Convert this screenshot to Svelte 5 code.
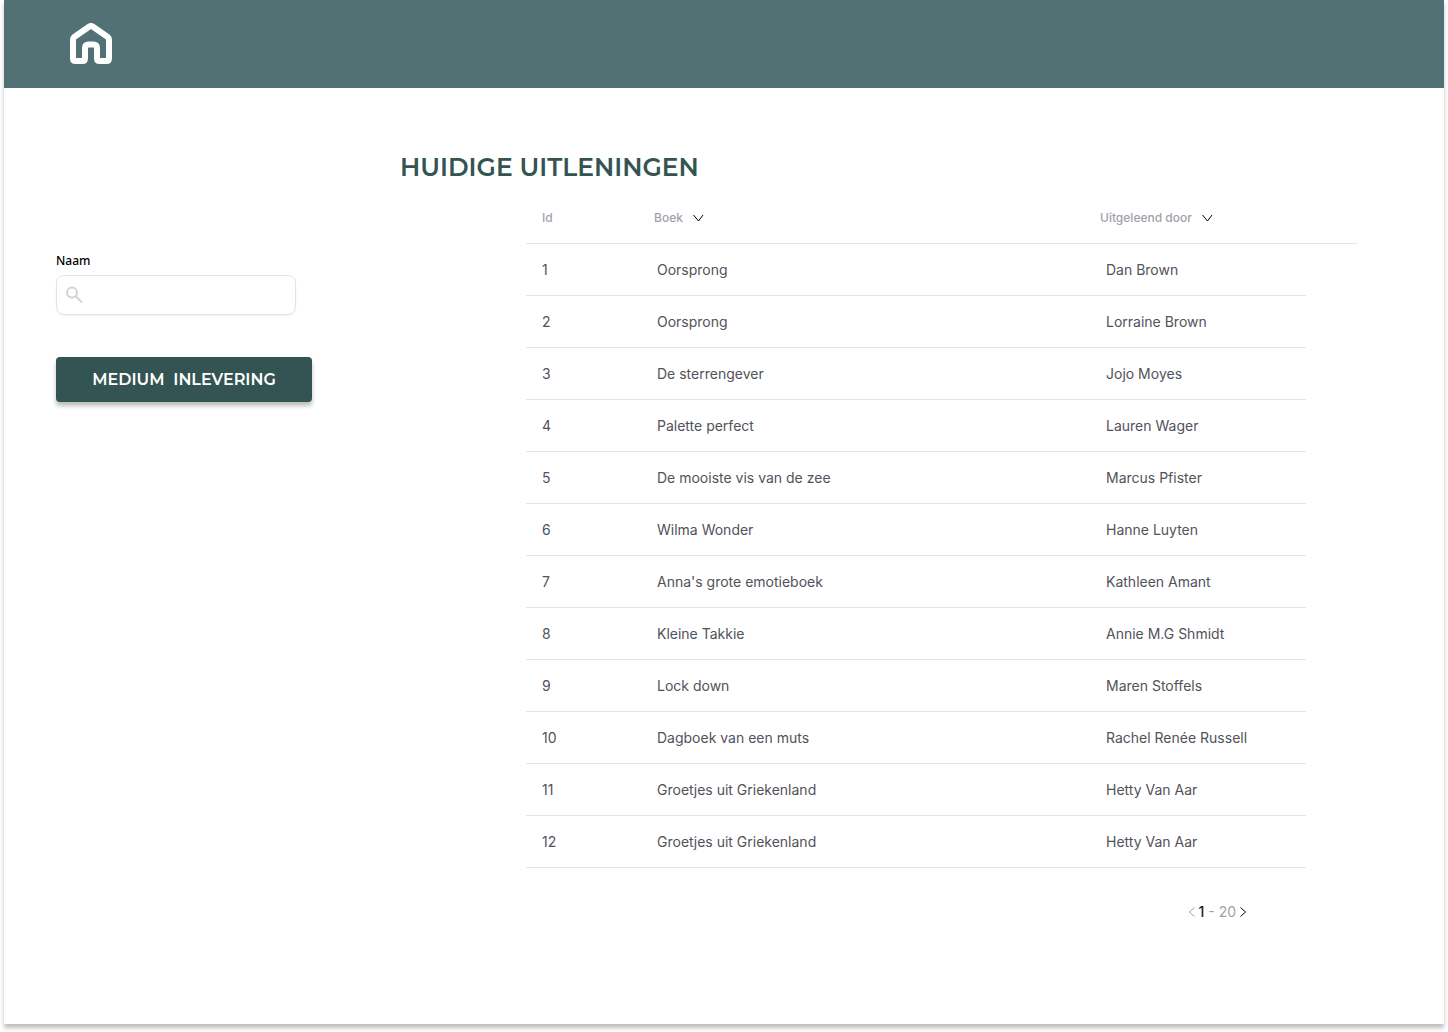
<script>
  const loans = [
    ['Oorsprong', 'Dan Brown'],
    ['Oorsprong', 'Lorraine Brown'],
    ['De sterrengever', 'Jojo Moyes'],
    ['Palette perfect', 'Lauren Wager'],
    ['De mooiste vis van de zee', 'Marcus Pfister'],
    ['Wilma Wonder', 'Hanne Luyten'],
    ["Anna's grote emotieboek", 'Kathleen Amant'],
    ['Kleine Takkie', 'Annie M.G Shmidt'],
    ['Lock down', 'Maren Stoffels'],
    ['Dagboek van een muts', 'Rachel Renée Russell'],
    ['Groetjes uit Griekenland', 'Hetty Van Aar'],
    ['Groetjes uit Griekenland', 'Hetty Van Aar']
  ].map(([book, borrower], i) => ({ id: i + 1, book, borrower }));

  let name = $state('');
</script>

{#snippet chevron()}
  <svg class="chevron" viewBox="0 0 12 12" aria-hidden="true"><path d="M1.500 3 6.500 9l4.500-6" /></svg>
{/snippet}

<div class="page">
  <header>
    <a class="home" href="#home" aria-label="Home">
      <svg viewBox="0 0 42 42" aria-hidden="true">
        <path d="M3 17Q3 15 4.600 13.700L19 3.700Q21 2.300 23 3.700L37.400 13.700Q39 15 39 17V35.500Q39 38 36.500 38H29.500Q27 38 27 35.500V25Q27 21.500 23.500 21.500H18.500Q15 21.500 15 25V35.500Q15 38 12.500 38H5.500Q3 38 3 35.500Z" />
      </svg>
    </a>
  </header>

  <div class="content">
    <aside>
      <label for="naam">Naam</label>
      <div class="search">
        <svg viewBox="0 0 18 18" aria-hidden="true">
          <circle cx="7" cy="6.500" r="5" /><path d="m11 10.500 6 6" />
        </svg>
        <input id="naam" type="text" bind:value={name} />
      </div>
      <button class="return" type="button">MEDIUM&nbsp; INLEVERING</button>
    </aside>

    <main>
      <h1>HUIDIGE UITLENINGEN</h1>
      <div class="list">
        <table>
          <colgroup><col class="c-id" /><col class="c-book" /><col class="c-borrower" /><col class="c-end" /></colgroup>
          <thead>
            <tr>
              <th class="id" scope="col">Id</th>
              <th scope="col"><button type="button">Boek {@render chevron()}</button></th>
              <th scope="col"><button type="button">Uitgeleend door {@render chevron()}</button></th>
              <td></td>
            </tr>
          </thead>
          <tbody>
            {#each loans as loan (loan.id)}
              <tr>
                <td class="id">{loan.id}</td>
                <td class="book">{loan.book}</td>
                <td class="borrower">{loan.borrower}</td>
              </tr>
            {/each}
          </tbody>
        </table>
        <nav aria-label="Paginering">
          <button class="prev" type="button" aria-label="Vorige"><svg viewBox="0 0 8 12" aria-hidden="true"><path d="M6.500 1.500 1.500 6l5 4.500" /></svg></button>
          <span><strong>1</strong> - 20</span>
          <button type="button" aria-label="Volgende"><svg viewBox="0 0 8 12" aria-hidden="true"><path d="m1.500 1.500 5 4.500-5 4.500" /></svg></button>
        </nav>
      </div>
    </main>
  </div>
</div>

<style>
  :global(body) {
    background: #fff;
  }
  .page {
    box-sizing: border-box;
    min-height: calc(100vh - 8px);
    margin: 0 4px 8px;
    background: #fff;
    box-shadow: 0 4px 4px rgba(0, 0, 0, 0.25);
    font-family: Inter, "Liberation Sans", sans-serif;
    font-size: 14px;
    line-height: 20px;
    color: #52525b;
  }
  svg {
    display: block;
    fill: none;
    stroke: currentColor;
  }
  button {
    font: inherit;
    color: inherit;
    border: 0;
    padding: 0;
    background: none;
    cursor: pointer;
  }
  header {
    display: flex;
    align-items: center;
    height: 88px;
    padding: 0 66px;
    box-sizing: border-box;
    background: #527174;
  }
  .home {
    color: #fff;
  }
  .home svg {
    width: 42px;
    height: 42px;
    stroke-width: 6;
    stroke-linejoin: round;
  }
  .content {
    display: flex;
    gap: 88px;
    padding: 64px 87px 64px 52px;
  }
  aside {
    display: flex;
    flex-direction: column;
    flex: none;
    width: 256px;
    padding-top: 98px;
  }
  label {
    margin-bottom: 4px;
    font: 500 12px/21px "Noto Sans", sans-serif;
    color: #000;
  }
  .search {
    display: flex;
    align-items: center;
    gap: 8px;
    box-sizing: border-box;
    width: 240px;
    height: 40px;
    padding: 0 8px;
    border: 1px solid #e4e4e7;
    border-radius: 8px;
    box-shadow: 0 1px 2px rgba(0, 0, 0, 0.06);
    color: #d4d4d8;
  }
  .search svg {
    flex: none;
    width: 18px;
    height: 18px;
    stroke-width: 2;
  }
  .search input {
    flex: 1;
    min-width: 0;
    border: 0;
    outline: 0;
    background: none;
    font: inherit;
    color: #52525b;
  }
  .return {
    height: 45px;
    margin-top: 42px;
    border-radius: 4px;
    background: #335453;
    box-shadow: 0 4px 4px rgba(0, 0, 0, 0.25);
    font: 600 16px/20px Montserrat, Inter, sans-serif;
    color: #fff;
  }
  main {
    flex: 1;
    min-width: 0;
  }
  h1 {
    margin: 0 0 10px;
    font: 600 25px/30px Montserrat, Inter, sans-serif;
    color: #335453;
  }
  .list {
    padding-left: 126px;
  }
  table {
    width: 100%;
    table-layout: fixed;
    border-collapse: separate;
    border-spacing: 0;
  }
  .c-id {
    width: 128px;
  }
  .c-borrower {
    width: 206px;
  }
  .c-end {
    width: 51px;
  }
  th,
  td {
    box-sizing: border-box;
    height: 52px;
    padding: 0;
    border-bottom: 1px solid #e4e4e7;
    text-align: left;
    white-space: nowrap;
  }
  th {
    font-size: 12px;
    font-weight: 500;
    color: #a1a1aa;
  }
  th button {
    display: flex;
    align-items: center;
    gap: 9px;
  }
  .id {
    padding-left: 16px;
  }
  .book {
    padding-left: 3px;
  }
  .borrower {
    padding-left: 6px;
  }
  .chevron {
    width: 12px;
    height: 12px;
    stroke-width: 1;
    color: #000;
  }
  nav {
    display: flex;
    justify-content: flex-end;
    align-items: center;
    gap: 3px;
    margin-top: 34px;
    padding-right: 110px;
    color: #a1a1aa;
  }
  nav strong {
    font-weight: 500;
    color: #18181b;
  }
  nav button {
    color: #000;
  }
  nav .prev {
    color: #a1a1aa;
  }
  nav svg {
    width: 8px;
    height: 12px;
    stroke-width: 1;
  }
</style>
